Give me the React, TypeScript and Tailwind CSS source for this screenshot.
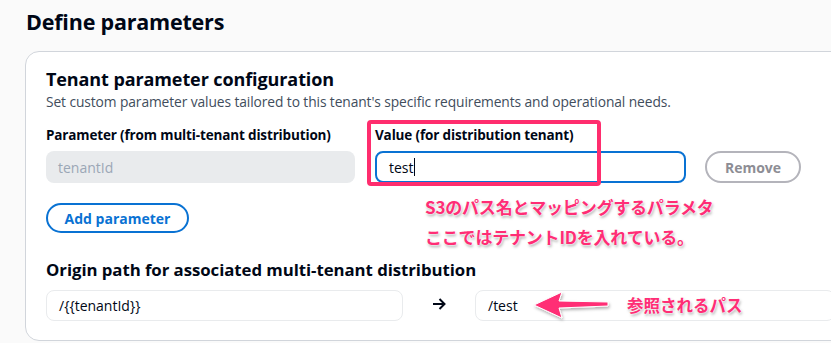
import React from "react";

const jp = {
  fontFamily: '"Noto Sans CJK JP", "Noto Sans", sans-serif',
};

export default function App() {
  return (
    <div
      className="relative w-[831px] h-[343px] overflow-hidden bg-[#fafafa] text-[#000716]"
      style={{ fontFamily: '"Open Sans", "Noto Sans", sans-serif' }}
    >
      <h1 className="pl-[26px] pt-[6px] h-[51px] text-[21.5px] font-bold leading-[32px] tracking-[-0.2px]">
        Define parameters
      </h1>
      <div className="ml-[25px] w-[830px] h-[290px] bg-white border border-[#d1d5db] rounded-[14px] pl-[20px] pt-[14px]">
        <h2 className="text-[18px] font-bold leading-[26px] tracking-[-0.1px]">
          Tenant parameter configuration
        </h2>
        <p className="text-[13.8px] leading-[20px] text-[#414d5c] tracking-[-0.1px]">
          Set custom parameter values tailored to this tenant's specific requirements and operational needs.
        </p>
        <div className="mt-[14px] flex items-end gap-[20px]">
          <div className="w-[309px] flex flex-col">
            <label className="text-[13.5px] font-bold leading-[18px] mb-[7px] tracking-[-0.15px]">
              Parameter (from multi-tenant distribution)
            </label>
            <div className="h-[32px] rounded-[8px] bg-[#e9ebed] px-[12px] flex items-center text-[14px] text-[#9ba7b6]">
              tenantId
            </div>
          </div>
          <div className="w-[311px] flex flex-col">
            <label className="text-[13.5px] font-bold leading-[18px] mb-[7px] tracking-[-0.15px]">
              Value (for distribution tenant)
            </label>
            <div className="h-[32px] rounded-[8px] border-2 border-[#0972d3] px-[12px] flex items-center text-[14px] text-[#000716]">
              test<span className="inline-block w-[1px] h-[18px] bg-[#000716]" />
            </div>
          </div>
          <button className="ml-[-1px] h-[32px] w-[96px] rounded-full border-2 border-[#b4b4bb] text-[14px] font-bold text-[#8d8d94]">
            Remove
          </button>
        </div>
        <button className="mt-[20px] h-[30px] w-[143px] rounded-full border-2 border-[#0972d3] text-[14px] font-bold text-[#0972d3]">
          Add parameter
        </button>
        <h3 className="mt-[26px] text-[16.8px] font-bold leading-[22px] tracking-[-0.05px]">
          Origin path for associated multi-tenant distribution
        </h3>
        <div className="mt-[9px] flex items-center">
          <div className="w-[357px] h-[31px] rounded-[8px] border border-[#e9ebed] px-[12px] flex items-center text-[14px]">
            /{"{{"}tenantId{"}}"}
          </div>
          <div className="w-[72px] flex justify-center">
            <svg width="14" height="12" viewBox="0 0 14 12" className="mt-[-4px]">
              <path d="M1 6 H12.5 M7.5 1 L12.5 6 L7.5 11" fill="none" stroke="#000716" strokeWidth="2" strokeLinejoin="miter" />
            </svg>
          </div>
          <div className="w-[360px] h-[31px] rounded-[8px] border border-[#e9ebed] px-[12px] flex items-center text-[14px]">
            /test
          </div>
        </div>
      </div>

      {/* Annotation overlays */}
      <div className="absolute left-[367px] top-[120px] w-[234px] h-[66px] border-[4px] border-[#ff2d6e] rounded-[4px]" />
      <div
        className="absolute left-[425px] top-[192px] text-[17px] font-bold leading-[30px] tracking-[-0.2px] text-[#ff2d75] [text-shadow:0_0_2px_#fff,0_0_2px_#fff,1px_2px_3px_rgba(0,0,0,0.35)]"
        style={jp}
      >
        <div>S3のパス名とマッピングするパラメタ</div>
        <div>ここではテナントIDを入れている。</div>
      </div>
      <div
        className="absolute left-[627px] top-[294px] text-[16.5px] font-bold leading-[22px] text-[#ff2d75] [text-shadow:0_0_2px_#fff,0_0_2px_#fff,1px_2px_3px_rgba(0,0,0,0.35)]"
        style={jp}
      >
        参照されるパス
      </div>
      <svg
        className="absolute left-[530px] top-[288px]"
        width="84"
        height="36"
        viewBox="0 0 84 36"
      >
        <defs>
          <filter id="sh" x="-20%" y="-30%" width="140%" height="160%">
            <feDropShadow dx="1" dy="2" stdDeviation="1.5" floodColor="#000" floodOpacity="0.3" />
          </filter>
        </defs>
        <path
          d="M4 17 L32 4 L29 13 L78 14 L78 18 L29 20 L32 30 Z"
          fill="#ff2d75"
          stroke="#fff"
          strokeWidth="1"
          filter="url(#sh)"
        />
      </svg>
    </div>
  );
}
